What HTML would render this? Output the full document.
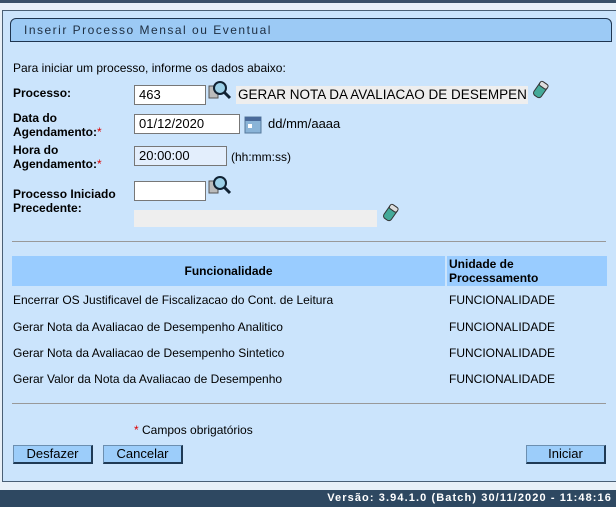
<html><head><style>
body{margin:0;width:616px;height:507px;background:#e8f0f8;font-family:"Liberation Sans",sans-serif;font-size:12px;color:#000;position:relative;overflow:hidden}
.a{position:absolute;white-space:nowrap}
.in{position:absolute;height:20px;border:1px solid #777;background:#fff;box-sizing:border-box;font-size:13px;padding:2px 4px;line-height:14px}
b{font-weight:bold}
.r{color:#d00}
.btn{position:absolute;height:19px;background:#9ccdfa;border:1px solid #6c8fb0;border-right:2px solid #1f3a55;border-bottom:2px solid #1f3a55;box-sizing:border-box;text-align:center;font-size:13px;line-height:16px}
</style></head><body>
<div class="a" style="left:0;top:0;width:616px;height:3px;background:#3a5068"></div>
<div class="a" style="left:2px;top:10px;width:620px;height:472px;background:#cbe4fc;border:1px solid #4a5f75;box-sizing:border-box"></div>
<div class="a" style="left:10px;top:18px;width:602px;height:24px;background:#9ccaf5;border:1px solid #1f3550;border-radius:6px 6px 0 0;box-sizing:border-box"></div>
<div class="a" style="left:24px;top:23px;font-size:12px;letter-spacing:1.5px;color:#1d2d40">Inserir Processo Mensal ou Eventual</div>
<div class="a" style="left:13px;top:61px">Para iniciar um processo, informe os dados abaixo:</div>
<div class="a" style="left:13px;top:86px"><b>Processo:</b></div>
<div class="in" style="left:134px;top:85px;width:72px">463</div>
<svg class="a" style="left:208px;top:80px" width="26" height="22"><rect x="1" y="6" width="9" height="12" fill="#bbb" stroke="#555"/><circle cx="12" cy="8" r="6" fill="#9cd0e8" stroke="#123" stroke-width="2"/><line x1="16" y1="12" x2="22" y2="18" stroke="#123" stroke-width="3"/></svg>
<div class="a" style="left:236px;top:86px;width:290px;height:18px;background:#eeeeee;font-size:13.5px;line-height:18px;padding-left:2px;overflow:hidden">GERAR NOTA DA AVALIACAO DE DESEMPEN</div>
<svg class="a" style="left:531px;top:80px" width="20" height="20"><g transform="rotate(35 10 10)"><rect x="5" y="2" width="9" height="16" rx="3" fill="#4a9" stroke="#333"/><rect x="5" y="2" width="9" height="5" rx="2" fill="#ddd" stroke="#333"/></g></svg>
<div class="a" style="left:13px;top:111px;line-height:14px"><b>Data do<br>Agendamento:</b><span class="r">*</span></div>
<div class="in" style="left:134px;top:114px;width:106px">01/12/2020</div>
<svg class="a" style="left:244px;top:116px" width="18" height="18"><rect x="1" y="1" width="16" height="16" fill="#8ab4d8" stroke="#56789a"/><rect x="1" y="1" width="16" height="4" fill="#4a6a9a"/><rect x="4" y="8" width="4" height="4" fill="#fff"/></svg>
<div class="a" style="left:268px;top:116px;font-size:13px">dd/mm/aaaa</div>
<div class="a" style="left:13px;top:143px;line-height:14px"><b>Hora do<br>Agendamento:</b><span class="r">*</span></div>
<div class="in" style="left:134px;top:146px;width:93px;background:#e3eefc">20:00:00</div>
<div class="a" style="left:231px;top:150px">(hh:mm:ss)</div>
<div class="a" style="left:13px;top:187px;line-height:14px"><b>Processo Iniciado<br>Precedente:</b></div>
<div class="in" style="left:134px;top:181px;width:72px"></div>
<svg class="a" style="left:208px;top:175px" width="26" height="22"><rect x="1" y="6" width="9" height="12" fill="#bbb" stroke="#555"/><circle cx="12" cy="8" r="6" fill="#9cd0e8" stroke="#123" stroke-width="2"/><line x1="16" y1="12" x2="22" y2="18" stroke="#123" stroke-width="3"/></svg>
<div class="a" style="left:134px;top:210px;width:243px;height:17px;background:#eeeeee"></div>
<svg class="a" style="left:381px;top:203px" width="20" height="20"><g transform="rotate(35 10 10)"><rect x="5" y="2" width="9" height="16" rx="3" fill="#4a9" stroke="#333"/><rect x="5" y="2" width="9" height="5" rx="2" fill="#ddd" stroke="#333"/></g></svg>
<div class="a" style="left:12px;top:241px;width:594px;height:1px;background:#999"></div>
<div class="a" style="left:12px;top:256px;width:433px;height:30px;background:#99ccff"></div>
<div class="a" style="left:447px;top:256px;width:160px;height:30px;background:#99ccff"></div>
<div class="a" style="left:12px;top:264px;width:433px;text-align:center"><b>Funcionalidade</b></div>
<div class="a" style="left:449px;top:257px;line-height:14px"><b>Unidade de<br>Processamento</b></div>
<div class="a" style="left:13px;top:293px">Encerrar OS Justificavel de Fiscalizacao do Cont. de Leitura</div>
<div class="a" style="left:449px;top:293px">FUNCIONALIDADE</div>
<div class="a" style="left:13px;top:320px">Gerar Nota da Avaliacao de Desempenho Analitico</div>
<div class="a" style="left:449px;top:320px">FUNCIONALIDADE</div>
<div class="a" style="left:13px;top:346px">Gerar Nota da Avaliacao de Desempenho Sintetico</div>
<div class="a" style="left:449px;top:346px">FUNCIONALIDADE</div>
<div class="a" style="left:13px;top:372px">Gerar Valor da Nota da Avaliacao de Desempenho</div>
<div class="a" style="left:449px;top:372px">FUNCIONALIDADE</div>
<div class="a" style="left:12px;top:403px;width:594px;height:1px;background:#999"></div>
<div class="a" style="left:134px;top:423px"><span class="r">*</span> Campos obrigatórios</div>
<div class="btn" style="left:13px;top:445px;width:80px">Desfazer</div>
<div class="btn" style="left:103px;top:445px;width:80px">Cancelar</div>
<div class="btn" style="left:526px;top:445px;width:80px">Iniciar</div>
<div class="a" style="left:0;top:490px;width:616px;height:17px;background:#2e4861"></div>
<div class="a" style="right:4px;top:492px;color:#fff;font-weight:bold;font-size:11px;letter-spacing:1.1px">Versão: 3.94.1.0 (Batch) 30/11/2020 - 11:48:16</div>
</body></html>
